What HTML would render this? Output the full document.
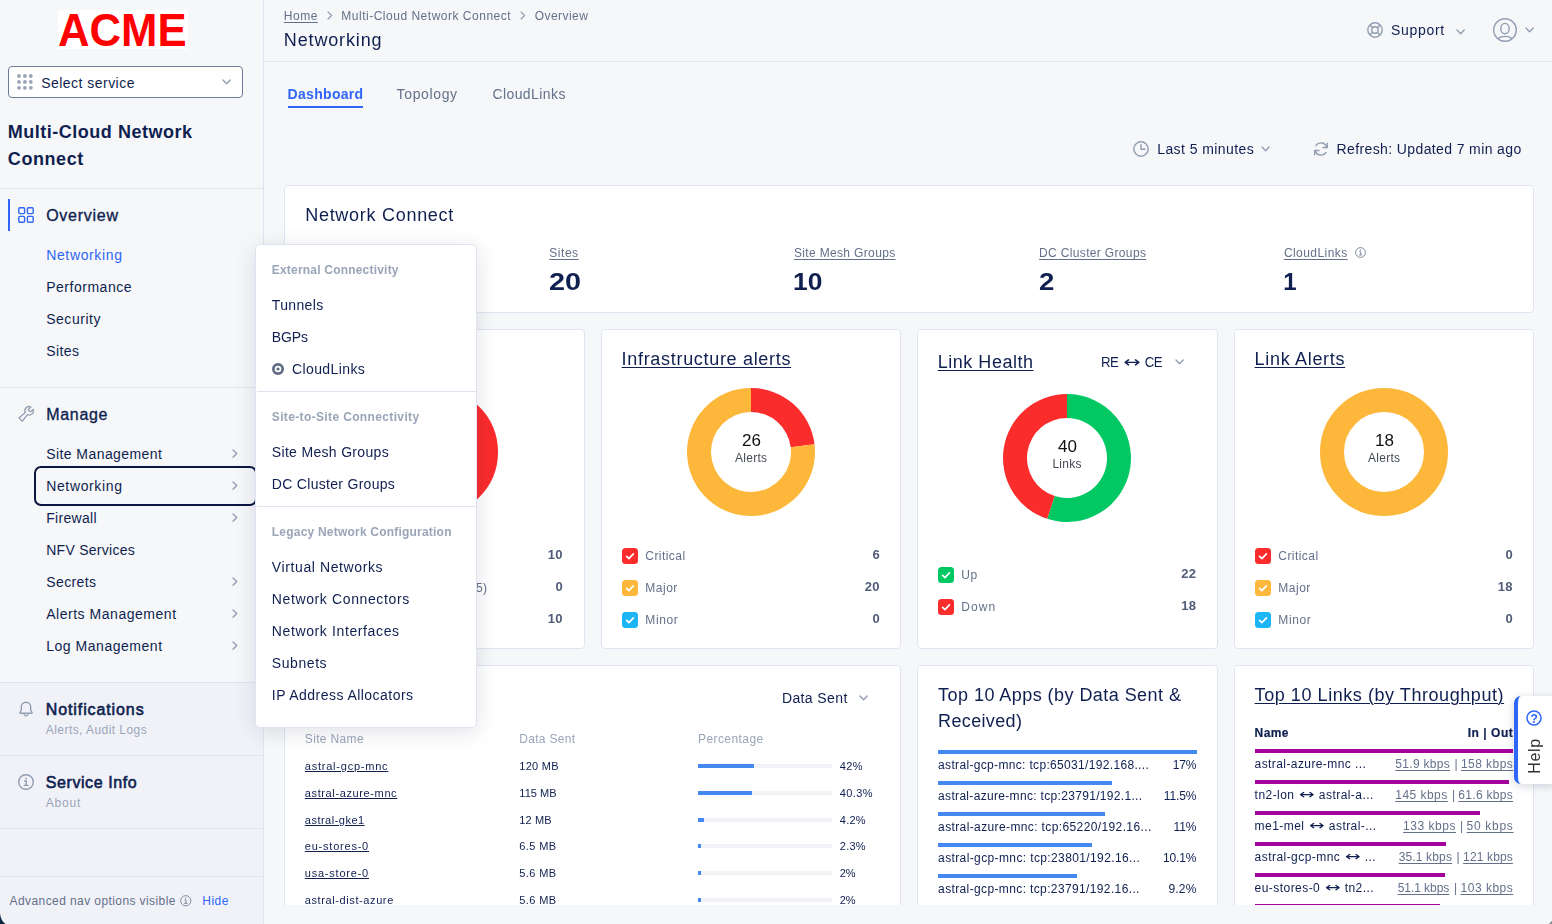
<!DOCTYPE html>
<html lang="en"><head><meta charset="utf-8"><title>Networking - Multi-Cloud Network Connect</title><style>
html,body{margin:0;padding:0}
body{width:1552px;height:924px;position:relative;overflow:hidden;opacity:0.9999;background:#f6f7f9;font-family:"Liberation Sans",sans-serif;color:#0f1f50}
.t{position:absolute;white-space:nowrap}
.b{position:absolute;box-sizing:border-box}
.ar{display:inline-block;font-family:"DejaVu Sans",sans-serif;font-size:1.12em;line-height:0;transform:scaleX(1.38);margin:0 0.19em}
svg.b{overflow:visible}
</style></head><body>
<div class="b" style="left:0px;top:0px;width:264px;height:924px;background:#f6f7f9;border-right:1px solid #dfe4f0;"></div>
<div class="b" style="left:0px;top:682px;width:263px;height:242px;background:#f1f2f8;"></div>
<div class="b" style="left:264px;top:61px;width:1288px;height:1px;background:#dfe4f0;"></div>
<div class="b" style="left:58px;top:10px;width:130px;height:39px;background:#ffffff;"></div>
<span class="t" style="top:7px;font-size:46px;line-height:46px;left:57.8px;font-weight:700;color:#ff0000;transform:scaleX(0.95);transform-origin:0 0;">ACME</span>
<div class="b" style="left:8px;top:66px;width:235px;height:32px;background:#fff;border:1px solid #6f7c98;border-radius:4px;"></div>
<svg class="b" style="left:17.3px;top:74.2px;" width="16" height="16" viewBox="0 0 16 16"><g fill="#9aa5b8"><circle cx="2.0" cy="2.0" r="1.9"/><circle cx="2.0" cy="7.9" r="1.9"/><circle cx="2.0" cy="13.8" r="1.9"/><circle cx="7.9" cy="2.0" r="1.9"/><circle cx="7.9" cy="7.9" r="1.9"/><circle cx="7.9" cy="13.8" r="1.9"/><circle cx="13.8" cy="2.0" r="1.9"/><circle cx="13.8" cy="7.9" r="1.9"/><circle cx="13.8" cy="13.8" r="1.9"/></g></svg>
<span class="t" style="top:76px;font-size:14px;line-height:14px;left:41.2px;letter-spacing:0.47px;">Select service</span>
<svg class="b" style="left:220.5px;top:77.7px;" width="11.2" height="7.8" viewBox="0 0 11.2 7.8"><path d="M2 2 L5.6 5.8 L9.2 2" fill="none" stroke="#929db2" stroke-width="1.4" stroke-linecap="round" stroke-linejoin="round"/></svg>
<span class="t" style="top:123px;font-size:18px;line-height:18px;left:7.8px;font-weight:700;letter-spacing:0.51px;">Multi-Cloud Network</span>
<span class="t" style="top:150px;font-size:18px;line-height:18px;left:7.8px;font-weight:700;letter-spacing:0.58px;">Connect</span>
<div class="b" style="left:0px;top:188px;width:263px;height:1px;background:#dfe4f0;"></div>
<div class="b" style="left:8px;top:199px;width:2px;height:32px;background:#2f66f6;"></div>
<svg class="b" style="left:18px;top:207px;" width="16" height="16" viewBox="0 0 16 16"><g fill="none" stroke="#2f66f6" stroke-width="1.4"><rect x="0.8" y="0.8" width="5.8" height="5.8" rx="1"/><rect x="9.4" y="0.8" width="5.8" height="5.8" rx="1"/><rect x="0.8" y="9.4" width="5.8" height="5.8" rx="1"/><rect x="9.4" y="9.4" width="5.8" height="5.8" rx="1"/></g></svg>
<span class="t" style="top:208px;font-size:16px;line-height:16px;left:46.2px;letter-spacing:0.73px;-webkit-text-stroke:0.35px #0f1f50;">Overview</span>
<span class="t" style="top:248px;font-size:14px;line-height:14px;left:46.2px;color:#2f66f6;letter-spacing:0.64px;">Networking</span>
<span class="t" style="top:280px;font-size:14px;line-height:14px;left:46.2px;letter-spacing:0.52px;">Performance</span>
<span class="t" style="top:312px;font-size:14px;line-height:14px;left:46.2px;letter-spacing:0.53px;">Security</span>
<span class="t" style="top:344px;font-size:14px;line-height:14px;left:46.2px;letter-spacing:0.42px;">Sites</span>
<div class="b" style="left:0px;top:387px;width:263px;height:1px;background:#dfe4f0;"></div>
<svg class="b" style="left:18px;top:406px;" width="16" height="16" viewBox="0 0 16 16"><path d="M0.900 11.900L7.300 6.600A4.200 4.200 0 0 1 12.900 1L10.200 3.700L12.500 5.900L15.100 3.400A4.200 4.200 0 0 1 9.500 8.700L4.300 15.200Z" fill="none" stroke="#929db2" stroke-width="1.300" stroke-linejoin="round"/></svg>
<span class="t" style="top:407px;font-size:16px;line-height:16px;left:46.2px;letter-spacing:0.7px;-webkit-text-stroke:0.35px #0f1f50;">Manage</span>
<span class="t" style="top:447px;font-size:14px;line-height:14px;left:46.2px;letter-spacing:0.43px;">Site Management</span>
<svg class="b" style="left:230.6px;top:448.4px;" width="7.8" height="11.2" viewBox="0 0 7.8 11.2"><path d="M2 2 L5.8 5.6 L2 9.2" fill="none" stroke="#929db2" stroke-width="1.4" stroke-linecap="round" stroke-linejoin="round"/></svg>
<span class="t" style="top:479px;font-size:14px;line-height:14px;left:46.2px;letter-spacing:0.64px;">Networking</span>
<svg class="b" style="left:230.6px;top:480.4px;" width="7.8" height="11.2" viewBox="0 0 7.8 11.2"><path d="M2 2 L5.8 5.6 L2 9.2" fill="none" stroke="#929db2" stroke-width="1.4" stroke-linecap="round" stroke-linejoin="round"/></svg>
<span class="t" style="top:511px;font-size:14px;line-height:14px;left:46.2px;letter-spacing:0.3px;">Firewall</span>
<svg class="b" style="left:230.6px;top:512.4px;" width="7.8" height="11.2" viewBox="0 0 7.8 11.2"><path d="M2 2 L5.8 5.6 L2 9.2" fill="none" stroke="#929db2" stroke-width="1.4" stroke-linecap="round" stroke-linejoin="round"/></svg>
<span class="t" style="top:543px;font-size:14px;line-height:14px;left:46.2px;letter-spacing:0.27px;">NFV Services</span>
<span class="t" style="top:575px;font-size:14px;line-height:14px;left:46.2px;letter-spacing:0.41px;">Secrets</span>
<svg class="b" style="left:230.6px;top:576.4px;" width="7.8" height="11.2" viewBox="0 0 7.8 11.2"><path d="M2 2 L5.8 5.6 L2 9.2" fill="none" stroke="#929db2" stroke-width="1.4" stroke-linecap="round" stroke-linejoin="round"/></svg>
<span class="t" style="top:607px;font-size:14px;line-height:14px;left:46.2px;letter-spacing:0.53px;">Alerts Management</span>
<svg class="b" style="left:230.6px;top:608.4px;" width="7.8" height="11.2" viewBox="0 0 7.8 11.2"><path d="M2 2 L5.8 5.6 L2 9.2" fill="none" stroke="#929db2" stroke-width="1.4" stroke-linecap="round" stroke-linejoin="round"/></svg>
<span class="t" style="top:639px;font-size:14px;line-height:14px;left:46.2px;letter-spacing:0.53px;">Log Management</span>
<svg class="b" style="left:230.6px;top:640.4px;" width="7.8" height="11.2" viewBox="0 0 7.8 11.2"><path d="M2 2 L5.8 5.6 L2 9.2" fill="none" stroke="#929db2" stroke-width="1.4" stroke-linecap="round" stroke-linejoin="round"/></svg>
<div class="b" style="left:34px;top:466px;width:223px;height:40px;border:2px solid #0b1641;border-radius:7px;"></div>
<div class="b" style="left:0px;top:682px;width:263px;height:1px;background:#dfe4f0;"></div>
<svg class="b" style="left:18px;top:701px;" width="16" height="16" viewBox="0 0 16 16"><path d="M8 1.2c-2.9 0-4.7 2.2-4.7 4.9v2.6c0 .9-.5 1.7-1.2 2.3-.5.4-.3 1.3.4 1.3h11c.7 0 .9-.9.4-1.3-.7-.6-1.2-1.4-1.2-2.3V6.100c0-2.700-1.800-4.900-4.700-4.900z M6.200 13.600a1.900 1.900 0 0 0 3.600 0" fill="none" stroke="#929db2" stroke-width="1.4" stroke-linejoin="round" stroke-linecap="round"/></svg>
<span class="t" style="top:702px;font-size:16px;line-height:16px;left:45.8px;letter-spacing:0.89px;-webkit-text-stroke:0.6px #0f1f50;">Notifications</span>
<span class="t" style="top:724px;font-size:12px;line-height:12px;left:45.8px;color:#9aa5b8;letter-spacing:0.44px;">Alerts, Audit Logs</span>
<div class="b" style="left:0px;top:755px;width:263px;height:1px;background:#dfe4f0;"></div>
<svg class="b" style="left:18px;top:774px;" width="16" height="16" viewBox="0 0 16 16"><circle cx="8" cy="8" r="7.3" fill="none" stroke="#929db2" stroke-width="1.4"/><path d="M6.6 7h1.6v4.300M6.300 11.400h3.600" fill="none" stroke="#929db2" stroke-width="1.400" stroke-linecap="round"/><circle cx="8" cy="4.600" r="0.900" fill="#8e99ad"/></svg>
<span class="t" style="top:775px;font-size:16px;line-height:16px;left:45.8px;letter-spacing:0.57px;-webkit-text-stroke:0.6px #0f1f50;">Service Info</span>
<span class="t" style="top:797px;font-size:12px;line-height:12px;left:45.8px;color:#9aa5b8;letter-spacing:0.79px;">About</span>
<div class="b" style="left:0px;top:828px;width:263px;height:1px;background:#dfe4f0;"></div>
<div class="b" style="left:0px;top:876px;width:263px;height:1px;background:#dfe4f0;"></div>
<span class="t" style="top:895px;font-size:12px;line-height:12px;left:9.6px;color:#64708a;letter-spacing:0.41px;">Advanced nav options visible</span>
<svg class="b" style="left:180.2px;top:895px;" width="11.5" height="11.5" viewBox="0 0 11.5 11.5"><circle cx="5.75" cy="5.75" r="5.1" fill="none" stroke="#7f8aa0" stroke-width="1"/><path d="M4.800 5h1.200v3.200M4.500 8.300h2.700" fill="none" stroke="#7f8aa0" stroke-width="1" stroke-linecap="round"/><circle cx="5.750" cy="3.200" r="0.700" fill="#7f8aa0"/></svg>
<span class="t" style="top:895px;font-size:12px;line-height:12px;left:202.2px;color:#2f66f6;letter-spacing:0.54px;">Hide</span>
<span class="t" style="top:10px;font-size:12px;line-height:12px;left:283.8px;color:#64708a;letter-spacing:0.5px;text-decoration:underline;text-underline-offset:2px;text-decoration-thickness:1px;">Home</span>
<svg class="b" style="left:325.7px;top:10.0px;" width="7.6" height="11" viewBox="0 0 7.6 11"><path d="M2 2 L5.6 5.5 L2 9" fill="none" stroke="#8e99ad" stroke-width="1.1" stroke-linecap="round" stroke-linejoin="round"/></svg>
<span class="t" style="top:10px;font-size:12px;line-height:12px;left:341.3px;color:#64708a;letter-spacing:0.51px;">Multi-Cloud Network Connect</span>
<svg class="b" style="left:519.2px;top:10.0px;" width="7.6" height="11" viewBox="0 0 7.6 11"><path d="M2 2 L5.6 5.5 L2 9" fill="none" stroke="#8e99ad" stroke-width="1.1" stroke-linecap="round" stroke-linejoin="round"/></svg>
<span class="t" style="top:10px;font-size:12px;line-height:12px;left:534.8px;color:#64708a;letter-spacing:0.44px;">Overview</span>
<span class="t" style="top:31px;font-size:18px;line-height:18px;left:283.8px;letter-spacing:0.86px;">Networking</span>
<svg class="b" style="left:1366.6px;top:21.8px;" width="16" height="16" viewBox="0 0 16 16"><g fill="none" stroke="#929db2" stroke-width="1.4"><circle cx="8" cy="8" r="7.2"/><circle cx="8" cy="8" r="3.2"/><path d="M2.900 2.900l2.800 2.800M13.100 2.900l-2.800 2.800M2.900 13.100l2.800-2.800M13.100 13.100l-2.800-2.800"/></g></svg>
<span class="t" style="top:23px;font-size:14px;line-height:14px;left:1391.0px;letter-spacing:0.68px;">Support</span>
<svg class="b" style="left:1454.6px;top:27.5px;" width="11.2" height="7.8" viewBox="0 0 11.2 7.8"><path d="M2 2 L5.6 5.8 L9.2 2" fill="none" stroke="#929db2" stroke-width="1.4" stroke-linecap="round" stroke-linejoin="round"/></svg>
<svg class="b" style="left:1493px;top:17.6px;" width="24" height="24" viewBox="0 0 24 24"><g fill="none" stroke="#929db2" stroke-width="1.400"><circle cx="12" cy="12" r="11.300"/><ellipse cx="12" cy="10.600" rx="4.200" ry="5.200"/><path d="M4.800 20.600c2-1.500 4.400-2.200 7.200-2.200s5.200.7 7.200 2.200"/></g></svg>
<svg class="b" style="left:1523.6px;top:25.6px;" width="11.2" height="7.8" viewBox="0 0 11.2 7.8"><path d="M2 2 L5.6 5.8 L9.2 2" fill="none" stroke="#929db2" stroke-width="1.4" stroke-linecap="round" stroke-linejoin="round"/></svg>
<span class="t" style="top:87px;font-size:14px;line-height:14px;left:287.6px;font-weight:700;color:#2f66f6;letter-spacing:0.3px;">Dashboard</span>
<div class="b" style="left:288px;top:106px;width:75px;height:2px;background:#2f66f6;"></div>
<span class="t" style="top:87px;font-size:14px;line-height:14px;left:396.6px;color:#64708a;letter-spacing:0.64px;">Topology</span>
<span class="t" style="top:87px;font-size:14px;line-height:14px;left:492.4px;color:#64708a;letter-spacing:0.42px;">CloudLinks</span>
<svg class="b" style="left:1133px;top:141px;" width="16" height="16" viewBox="0 0 16 16"><g fill="none" stroke="#929db2" stroke-width="1.4" stroke-linecap="round"><circle cx="8" cy="8" r="7.2"/><path d="M8 3.600v4.600h4"/></g></svg>
<span class="t" style="top:142px;font-size:14px;line-height:14px;left:1157.2px;letter-spacing:0.42px;">Last 5 minutes</span>
<svg class="b" style="left:1260.2px;top:144.9px;" width="11.2" height="7.8" viewBox="0 0 11.2 7.8"><path d="M2 2 L5.6 5.8 L9.2 2" fill="none" stroke="#929db2" stroke-width="1.4" stroke-linecap="round" stroke-linejoin="round"/></svg>
<svg class="b" style="left:1313px;top:141px;" width="16" height="16" viewBox="0 0 16 16"><g fill="none" stroke="#929db2" stroke-width="1.400" stroke-linecap="round" stroke-linejoin="round"><path d="M13.800 6.500A6 6 0 0 0 3 4.500"/><path d="M14.300 2.200v4.300h-4.300"/><path d="M2.200 9.500A6 6 0 0 0 13 11.500"/><path d="M1.700 13.800V9.500h4.300"/></g></svg>
<span class="t" style="top:142px;font-size:14px;line-height:14px;left:1336.6px;letter-spacing:0.38px;">Refresh: Updated 7 min ago</span>
<div class="b" style="left:284px;top:185px;width:1250px;height:128px;background:#fff;border:1px solid #dfe4f0;border-radius:4px;"></div>
<span class="t" style="top:206px;font-size:18px;line-height:18px;left:305.2px;letter-spacing:0.72px;">Network Connect</span>
<span class="t" style="top:247px;font-size:12px;line-height:12px;left:549.3px;color:#64708a;letter-spacing:0.53px;text-decoration:underline;text-underline-offset:2px;text-decoration-thickness:1px;">Sites</span>
<span class="t" style="top:270px;font-size:24px;line-height:24px;left:548.7px;font-weight:700;transform:scaleX(1.2);transform-origin:0 0;">20</span>
<span class="t" style="top:247px;font-size:12px;line-height:12px;left:793.9px;color:#64708a;letter-spacing:0.35px;text-decoration:underline;text-underline-offset:2px;text-decoration-thickness:1px;">Site Mesh Groups</span>
<span class="t" style="top:270px;font-size:24px;line-height:24px;left:793.3px;font-weight:700;transform:scaleX(1.1);transform-origin:0 0;">10</span>
<span class="t" style="top:247px;font-size:12px;line-height:12px;left:1039.1px;color:#64708a;letter-spacing:0.34px;text-decoration:underline;text-underline-offset:2px;text-decoration-thickness:1px;">DC Cluster Groups</span>
<span class="t" style="top:270px;font-size:24px;line-height:24px;left:1038.5px;font-weight:700;transform:scaleX(1.15);transform-origin:0 0;">2</span>
<span class="t" style="top:247px;font-size:12px;line-height:12px;left:1283.9px;color:#64708a;letter-spacing:0.44px;text-decoration:underline;text-underline-offset:2px;text-decoration-thickness:1px;">CloudLinks</span>
<span class="t" style="top:270px;font-size:24px;line-height:24px;left:1283.3px;font-weight:700;transform:scaleX(1.0);transform-origin:0 0;">1</span>
<svg class="b" style="left:1355px;top:247px;" width="11" height="11" viewBox="0 0 11 11"><circle cx="5.5" cy="5.5" r="4.900" fill="none" stroke="#7f8aa0" stroke-width="1"/><path d="M4.600 4.800h1.100v3M4.300 7.900h2.500" fill="none" stroke="#7f8aa0" stroke-width="1" stroke-linecap="round"/><circle cx="5.500" cy="3" r="0.700" fill="#7f8aa0"/></svg>
<div class="b" style="left:284px;top:329px;width:301px;height:320px;background:#fff;border:1px solid #dfe4f0;border-radius:4px;"></div>
<svg class="b" style="left:370px;top:388px;" width="128" height="128" viewBox="0 0 128 128"><circle cx="64" cy="64" r="52.0" fill="none" stroke="#fb2c2c" stroke-width="24"/></svg>
<span class="t" style="top:432px;font-size:17px;line-height:17px;left:425.0px;color:#111;">10</span>
<span class="t" style="top:452px;font-size:12px;line-height:12px;left:420.1px;color:#444a55;letter-spacing:0.3px;">Sites</span>
<span class="t" style="top:548px;font-size:13px;line-height:13px;right:989.1px;font-weight:700;color:#4f5d78;letter-spacing:0.3px;">10</span>
<span class="t" style="top:580px;font-size:13px;line-height:13px;right:989.1px;font-weight:700;color:#4f5d78;letter-spacing:0.3px;">0</span>
<span class="t" style="top:612px;font-size:13px;line-height:13px;right:989.1px;font-weight:700;color:#4f5d78;letter-spacing:0.3px;">10</span>
<span class="t" style="top:582px;font-size:12px;line-height:12px;right:1064.6px;color:#64708a;letter-spacing:0.3px;">Waiting for registration (5)</span>
<div class="b" style="left:601px;top:329px;width:300px;height:320px;background:#fff;border:1px solid #dfe4f0;border-radius:4px;"></div>
<span class="t" style="top:349.5px;font-size:18px;line-height:18px;left:621.6px;letter-spacing:0.69px;text-decoration:underline;text-underline-offset:2px;text-decoration-thickness:1px;">Infrastructure alerts</span>
<svg class="b" style="left:687px;top:388px;" width="128" height="128" viewBox="0 0 128 128"><path d="M64.00 0.00A64 64 0 0 1 127.53 56.29L103.71 59.18A40 40 0 0 0 64.00 24.00Z" fill="#fb2c2c"/><path d="M127.53 56.29A64 64 0 1 1 64.00 0.00L64.00 24.00A40 40 0 1 0 103.71 59.18Z" fill="#fdb73a"/></svg>
<span class="t" style="top:432px;font-size:17px;line-height:17px;left:742.0px;color:#111;">26</span>
<span class="t" style="top:452px;font-size:12px;line-height:12px;left:734.9px;color:#444a55;letter-spacing:0.3px;">Alerts</span>
<svg class="b" style="left:622px;top:548px;" width="16" height="16" viewBox="0 0 16 16"><rect width="16" height="16" rx="3.5" fill="#fb2c2c"/><path d="M4.600 8.300l2.300 2.300 4.500-4.700" fill="none" stroke="#fff" stroke-width="1.700" stroke-linecap="round" stroke-linejoin="round"/></svg>
<span class="t" style="top:550.3px;font-size:12px;line-height:12px;left:645.3px;color:#64708a;letter-spacing:0.45px;">Critical</span>
<span class="t" style="top:548px;font-size:13px;line-height:13px;right:672.1px;font-weight:700;color:#4f5d78;letter-spacing:0.3px;">6</span>
<svg class="b" style="left:622px;top:580px;" width="16" height="16" viewBox="0 0 16 16"><rect width="16" height="16" rx="3.5" fill="#fdb73a"/><path d="M4.600 8.300l2.300 2.300 4.500-4.700" fill="none" stroke="#fff" stroke-width="1.700" stroke-linecap="round" stroke-linejoin="round"/></svg>
<span class="t" style="top:582.3px;font-size:12px;line-height:12px;left:645.3px;color:#64708a;letter-spacing:0.5px;">Major</span>
<span class="t" style="top:580px;font-size:13px;line-height:13px;right:672.1px;font-weight:700;color:#4f5d78;letter-spacing:0.3px;">20</span>
<svg class="b" style="left:622px;top:612px;" width="16" height="16" viewBox="0 0 16 16"><rect width="16" height="16" rx="3.5" fill="#1db5f5"/><path d="M4.600 8.300l2.300 2.300 4.500-4.700" fill="none" stroke="#fff" stroke-width="1.700" stroke-linecap="round" stroke-linejoin="round"/></svg>
<span class="t" style="top:614.3px;font-size:12px;line-height:12px;left:645.3px;color:#64708a;letter-spacing:0.6px;">Minor</span>
<span class="t" style="top:612px;font-size:13px;line-height:13px;right:672.1px;font-weight:700;color:#4f5d78;letter-spacing:0.3px;">0</span>
<div class="b" style="left:917px;top:329px;width:301px;height:320px;background:#fff;border:1px solid #dfe4f0;border-radius:4px;"></div>
<span class="t" style="top:352.5px;font-size:18px;line-height:18px;left:937.7px;letter-spacing:0.53px;text-decoration:underline;text-underline-offset:2px;text-decoration-thickness:1px;">Link Health</span>
<span class="t" style="top:355px;font-size:14px;line-height:14px;left:1101.0px;letter-spacing:-0.6px;transform:scaleX(0.945);transform-origin:0 0;">RE<span class="ar" style="margin:0 0.46em 0 0.5em;letter-spacing:0">↔</span>CE</span>
<svg class="b" style="left:1173.9px;top:357.7px;" width="11.2" height="7.8" viewBox="0 0 11.2 7.8"><path d="M2 2 L5.6 5.8 L9.2 2" fill="none" stroke="#929db2" stroke-width="1.4" stroke-linecap="round" stroke-linejoin="round"/></svg>
<svg class="b" style="left:1003px;top:394px;" width="128" height="128" viewBox="0 0 128 128"><path d="M64.00 0.00A64 64 0 1 1 44.22 124.87L51.64 102.04A40 40 0 1 0 64.00 24.00Z" fill="#02c864"/><path d="M44.22 124.87A64 64 0 0 1 64.00 0.00L64.00 24.00A40 40 0 0 0 51.64 102.04Z" fill="#fb2c2c"/></svg>
<span class="t" style="top:438px;font-size:17px;line-height:17px;left:1058.0px;color:#111;">40</span>
<span class="t" style="top:458px;font-size:12px;line-height:12px;left:1052.4px;color:#444a55;letter-spacing:0.3px;">Links</span>
<svg class="b" style="left:938px;top:567px;" width="16" height="16" viewBox="0 0 16 16"><rect width="16" height="16" rx="3.5" fill="#02c864"/><path d="M4.600 8.300l2.300 2.300 4.500-4.700" fill="none" stroke="#fff" stroke-width="1.700" stroke-linecap="round" stroke-linejoin="round"/></svg>
<span class="t" style="top:569.3px;font-size:12px;line-height:12px;left:961.3px;color:#64708a;letter-spacing:0.46px;">Up</span>
<span class="t" style="top:567px;font-size:13px;line-height:13px;right:355.6px;font-weight:700;color:#4f5d78;letter-spacing:0.3px;">22</span>
<svg class="b" style="left:938px;top:599px;" width="16" height="16" viewBox="0 0 16 16"><rect width="16" height="16" rx="3.5" fill="#fb2c2c"/><path d="M4.600 8.300l2.300 2.300 4.500-4.700" fill="none" stroke="#fff" stroke-width="1.700" stroke-linecap="round" stroke-linejoin="round"/></svg>
<span class="t" style="top:601.3px;font-size:12px;line-height:12px;left:961.3px;color:#64708a;letter-spacing:1.04px;">Down</span>
<span class="t" style="top:599px;font-size:13px;line-height:13px;right:355.6px;font-weight:700;color:#4f5d78;letter-spacing:0.3px;">18</span>
<div class="b" style="left:1234px;top:329px;width:300px;height:320px;background:#fff;border:1px solid #dfe4f0;border-radius:4px;"></div>
<span class="t" style="top:349.5px;font-size:18px;line-height:18px;left:1254.6px;letter-spacing:0.68px;text-decoration:underline;text-underline-offset:2px;text-decoration-thickness:1px;">Link Alerts</span>
<svg class="b" style="left:1320px;top:388px;" width="128" height="128" viewBox="0 0 128 128"><circle cx="64" cy="64" r="52.0" fill="none" stroke="#fdb73a" stroke-width="24"/></svg>
<span class="t" style="top:432px;font-size:17px;line-height:17px;left:1375.0px;color:#111;">18</span>
<span class="t" style="top:452px;font-size:12px;line-height:12px;left:1367.9px;color:#444a55;letter-spacing:0.3px;">Alerts</span>
<svg class="b" style="left:1255px;top:548px;" width="16" height="16" viewBox="0 0 16 16"><rect width="16" height="16" rx="3.5" fill="#fb2c2c"/><path d="M4.600 8.300l2.300 2.300 4.500-4.700" fill="none" stroke="#fff" stroke-width="1.700" stroke-linecap="round" stroke-linejoin="round"/></svg>
<span class="t" style="top:550.3px;font-size:12px;line-height:12px;left:1278.3px;color:#64708a;letter-spacing:0.45px;">Critical</span>
<span class="t" style="top:548px;font-size:13px;line-height:13px;right:39.1px;font-weight:700;color:#4f5d78;letter-spacing:0.3px;">0</span>
<svg class="b" style="left:1255px;top:580px;" width="16" height="16" viewBox="0 0 16 16"><rect width="16" height="16" rx="3.5" fill="#fdb73a"/><path d="M4.600 8.300l2.300 2.300 4.500-4.700" fill="none" stroke="#fff" stroke-width="1.700" stroke-linecap="round" stroke-linejoin="round"/></svg>
<span class="t" style="top:582.3px;font-size:12px;line-height:12px;left:1278.3px;color:#64708a;letter-spacing:0.5px;">Major</span>
<span class="t" style="top:580px;font-size:13px;line-height:13px;right:39.1px;font-weight:700;color:#4f5d78;letter-spacing:0.3px;">18</span>
<svg class="b" style="left:1255px;top:612px;" width="16" height="16" viewBox="0 0 16 16"><rect width="16" height="16" rx="3.5" fill="#1db5f5"/><path d="M4.600 8.300l2.300 2.300 4.500-4.700" fill="none" stroke="#fff" stroke-width="1.700" stroke-linecap="round" stroke-linejoin="round"/></svg>
<span class="t" style="top:614.3px;font-size:12px;line-height:12px;left:1278.3px;color:#64708a;letter-spacing:0.6px;">Minor</span>
<span class="t" style="top:612px;font-size:13px;line-height:13px;right:39.1px;font-weight:700;color:#4f5d78;letter-spacing:0.3px;">0</span>
<div class="b" style="left:284px;top:665px;width:617px;height:260px;background:#fff;border:1px solid #dfe4f0;border-radius:4px;"></div>
<span class="t" style="top:688px;font-size:18px;line-height:18px;left:305.2px;">Top 10 Sites</span>
<span class="t" style="top:691px;font-size:14px;line-height:14px;left:781.9px;letter-spacing:0.39px;">Data Sent</span>
<svg class="b" style="left:857.5px;top:693.7px;" width="11.2" height="7.8" viewBox="0 0 11.2 7.8"><path d="M2 2 L5.6 5.8 L9.2 2" fill="none" stroke="#929db2" stroke-width="1.4" stroke-linecap="round" stroke-linejoin="round"/></svg>
<span class="t" style="top:733px;font-size:12px;line-height:12px;left:304.8px;color:#9aa5b8;letter-spacing:0.35px;">Site Name</span>
<span class="t" style="top:733px;font-size:12px;line-height:12px;left:519.3px;color:#9aa5b8;letter-spacing:0.3px;">Data Sent</span>
<span class="t" style="top:733px;font-size:12px;line-height:12px;left:698.0px;color:#9aa5b8;letter-spacing:0.42px;">Percentage</span>
<span class="t" style="top:761px;font-size:11px;line-height:11px;left:304.8px;letter-spacing:0.77px;text-decoration:underline;text-underline-offset:2px;text-decoration-thickness:1px;text-underline-offset:1px;">astral-gcp-mnc</span>
<span class="t" style="top:761px;font-size:11px;line-height:11px;left:519.3px;letter-spacing:0.26px;">120 MB</span>
<div class="b" style="left:698.4px;top:764px;width:133.7px;height:4px;background:#f1f3f7;"></div>
<div class="b" style="left:698.4px;top:764px;width:55.6px;height:4px;background:#4589f0;"></div>
<span class="t" style="top:761px;font-size:11px;line-height:11px;left:839.8px;letter-spacing:0.39px;">42%</span>
<span class="t" style="top:788px;font-size:11px;line-height:11px;left:304.8px;letter-spacing:0.62px;text-decoration:underline;text-underline-offset:2px;text-decoration-thickness:1px;text-underline-offset:1px;">astral-azure-mnc</span>
<span class="t" style="top:788px;font-size:11px;line-height:11px;left:519.3px;letter-spacing:0.04px;">115 MB</span>
<div class="b" style="left:698.4px;top:791px;width:133.7px;height:4px;background:#f1f3f7;"></div>
<div class="b" style="left:698.4px;top:791px;width:53.6px;height:4px;background:#4589f0;"></div>
<span class="t" style="top:788px;font-size:11px;line-height:11px;left:839.8px;letter-spacing:0.4px;">40.3%</span>
<span class="t" style="top:815px;font-size:11px;line-height:11px;left:304.8px;letter-spacing:0.49px;text-decoration:underline;text-underline-offset:2px;text-decoration-thickness:1px;text-underline-offset:1px;">astral-gke1</span>
<span class="t" style="top:815px;font-size:11px;line-height:11px;left:519.3px;letter-spacing:0.13px;">12 MB</span>
<div class="b" style="left:698.4px;top:818px;width:133.7px;height:4px;background:#f1f3f7;"></div>
<div class="b" style="left:698.4px;top:818px;width:5.6px;height:4px;background:#4589f0;"></div>
<span class="t" style="top:815px;font-size:11px;line-height:11px;left:839.8px;letter-spacing:0.24px;">4.2%</span>
<span class="t" style="top:841px;font-size:11px;line-height:11px;left:304.8px;letter-spacing:0.78px;text-decoration:underline;text-underline-offset:2px;text-decoration-thickness:1px;text-underline-offset:1px;">eu-stores-0</span>
<span class="t" style="top:841px;font-size:11px;line-height:11px;left:519.3px;letter-spacing:0.39px;">6.5 MB</span>
<div class="b" style="left:698.4px;top:844px;width:133.7px;height:4px;background:#f1f3f7;"></div>
<div class="b" style="left:698.4px;top:844px;width:3px;height:4px;background:#4589f0;"></div>
<span class="t" style="top:841px;font-size:11px;line-height:11px;left:839.8px;letter-spacing:0.24px;">2.3%</span>
<span class="t" style="top:868px;font-size:11px;line-height:11px;left:304.8px;letter-spacing:0.78px;text-decoration:underline;text-underline-offset:2px;text-decoration-thickness:1px;text-underline-offset:1px;">usa-store-0</span>
<span class="t" style="top:868px;font-size:11px;line-height:11px;left:519.3px;letter-spacing:0.39px;">5.6 MB</span>
<div class="b" style="left:698.4px;top:871px;width:133.7px;height:4px;background:#f1f3f7;"></div>
<div class="b" style="left:698.4px;top:871px;width:3px;height:4px;background:#4589f0;"></div>
<span class="t" style="top:868px;font-size:11px;line-height:11px;left:839.8px;letter-spacing:-0.1px;">2%</span>
<span class="t" style="top:895px;font-size:11px;line-height:11px;left:304.8px;letter-spacing:0.6px;text-decoration:underline;text-underline-offset:2px;text-decoration-thickness:1px;text-underline-offset:1px;">astral-dist-azure</span>
<span class="t" style="top:895px;font-size:11px;line-height:11px;left:519.3px;letter-spacing:0.39px;">5.6 MB</span>
<div class="b" style="left:698.4px;top:898px;width:133.7px;height:4px;background:#f1f3f7;"></div>
<div class="b" style="left:698.4px;top:898px;width:3px;height:4px;background:#4589f0;"></div>
<span class="t" style="top:895px;font-size:11px;line-height:11px;left:839.8px;letter-spacing:-0.1px;">2%</span>
<div class="b" style="left:917px;top:665px;width:301px;height:260px;background:#fff;border:1px solid #dfe4f0;border-radius:4px;"></div>
<span class="t" style="top:686px;font-size:18px;line-height:18px;left:938.1px;letter-spacing:0.45px;">Top 10 Apps (by Data Sent &amp;</span>
<span class="t" style="top:712px;font-size:18px;line-height:18px;left:938.1px;letter-spacing:0.35px;">Received)</span>
<div class="b" style="left:938px;top:750px;width:259.1px;height:4px;background:#4589f0;"></div>
<span class="t" style="top:758.5px;font-size:12px;line-height:12px;left:938.1px;letter-spacing:0.33px;">astral-gcp-mnc: tcp:65031/192.168....</span>
<span class="t" style="top:758.5px;font-size:12px;line-height:12px;right:355.8px;letter-spacing:-0.15px;">17%</span>
<div class="b" style="left:938px;top:781px;width:173.8px;height:4px;background:#4589f0;"></div>
<span class="t" style="top:789.5px;font-size:12px;line-height:12px;left:938.1px;letter-spacing:0.32px;">astral-azure-mnc: tcp:23791/192.1...</span>
<span class="t" style="top:789.5px;font-size:12px;line-height:12px;right:355.8px;letter-spacing:-0.15px;">11.5%</span>
<div class="b" style="left:938px;top:812px;width:166.8px;height:4px;background:#4589f0;"></div>
<span class="t" style="top:820.5px;font-size:12px;line-height:12px;left:938.1px;letter-spacing:0.38px;">astral-azure-mnc: tcp:65220/192.16...</span>
<span class="t" style="top:820.5px;font-size:12px;line-height:12px;right:355.8px;letter-spacing:-0.15px;">11%</span>
<div class="b" style="left:938px;top:843px;width:154.0px;height:4px;background:#4589f0;"></div>
<span class="t" style="top:851.5px;font-size:12px;line-height:12px;left:938.1px;letter-spacing:0.38px;">astral-gcp-mnc: tcp:23801/192.16...</span>
<span class="t" style="top:851.5px;font-size:12px;line-height:12px;right:355.8px;letter-spacing:-0.15px;">10.1%</span>
<div class="b" style="left:938px;top:874px;width:138.9px;height:4px;background:#4589f0;"></div>
<span class="t" style="top:882.5px;font-size:12px;line-height:12px;left:938.1px;letter-spacing:0.37px;">astral-gcp-mnc: tcp:23791/192.16...</span>
<span class="t" style="top:882.5px;font-size:12px;line-height:12px;right:355.5px;letter-spacing:0.15px;">9.2%</span>
<div class="b" style="left:1234px;top:665px;width:300px;height:260px;background:#fff;border:1px solid #dfe4f0;border-radius:4px;"></div>
<span class="t" style="top:686px;font-size:18px;line-height:18px;left:1254.6px;letter-spacing:0.56px;text-decoration:underline;text-underline-offset:2px;text-decoration-thickness:1px;">Top 10 Links (by Throughput)</span>
<span class="t" style="top:727px;font-size:12px;line-height:12px;left:1254.6px;font-weight:700;letter-spacing:0.37px;-webkit-text-stroke:0.2px #0f1f50;">Name</span>
<span class="t" style="top:727px;font-size:12px;line-height:12px;right:38.7px;font-weight:700;letter-spacing:0.54px;-webkit-text-stroke:0.2px #0f1f50;">In | Out</span>
<div class="b" style="left:1255px;top:749px;width:257.7px;height:4px;background:#a4049c;"></div>
<span class="t" style="top:758px;font-size:12px;line-height:12px;left:1254.6px;letter-spacing:0.41px;">astral-azure-mnc ...</span>
<span class="t" style="top:758px;font-size:12px;line-height:12px;right:38.8px;color:#64708a;letter-spacing:0.44px;text-decoration:underline;text-underline-offset:2px;text-decoration-thickness:1px;">158 kbps</span>
<span class="t" style="top:758px;font-size:12px;line-height:12px;left:1454.5px;color:#64708a;">|</span>
<span class="t" style="top:758px;font-size:12px;line-height:12px;right:101.9px;color:#64708a;letter-spacing:0.3px;text-decoration:underline;text-underline-offset:2px;text-decoration-thickness:1px;">51.9 kbps</span>
<div class="b" style="left:1255px;top:780px;width:254px;height:4px;background:#a4049c;"></div>
<span class="t" style="top:789px;font-size:12px;line-height:12px;left:1254.6px;letter-spacing:0.45px;">tn2-lon <span class="ar">↔</span> astral-a...</span>
<span class="t" style="top:789px;font-size:12px;line-height:12px;right:38.9px;color:#64708a;letter-spacing:0.3px;text-decoration:underline;text-underline-offset:2px;text-decoration-thickness:1px;">61.6 kbps</span>
<span class="t" style="top:789px;font-size:12px;line-height:12px;left:1451.9px;color:#64708a;">|</span>
<span class="t" style="top:789px;font-size:12px;line-height:12px;right:104.3px;color:#64708a;letter-spacing:0.47px;text-decoration:underline;text-underline-offset:2px;text-decoration-thickness:1px;">145 kbps</span>
<div class="b" style="left:1255px;top:811px;width:225px;height:4px;background:#a4049c;"></div>
<span class="t" style="top:820px;font-size:12px;line-height:12px;left:1254.6px;letter-spacing:0.45px;">me1-mel <span class="ar">↔</span> astral-...</span>
<span class="t" style="top:820px;font-size:12px;line-height:12px;right:38.5px;color:#64708a;letter-spacing:0.7px;text-decoration:underline;text-underline-offset:2px;text-decoration-thickness:1px;">50 kbps</span>
<span class="t" style="top:820px;font-size:12px;line-height:12px;left:1460.1px;color:#64708a;">|</span>
<span class="t" style="top:820px;font-size:12px;line-height:12px;right:96.1px;color:#64708a;letter-spacing:0.51px;text-decoration:underline;text-underline-offset:2px;text-decoration-thickness:1px;">133 kbps</span>
<div class="b" style="left:1255px;top:842px;width:191px;height:4px;background:#a4049c;"></div>
<span class="t" style="top:851px;font-size:12px;line-height:12px;left:1254.6px;letter-spacing:0.45px;">astral-gcp-mnc <span class="ar">↔</span> ...</span>
<span class="t" style="top:851px;font-size:12px;line-height:12px;right:39.1px;color:#64708a;letter-spacing:0.14px;text-decoration:underline;text-underline-offset:2px;text-decoration-thickness:1px;">121 kbps</span>
<span class="t" style="top:851px;font-size:12px;line-height:12px;left:1456.6px;color:#64708a;">|</span>
<span class="t" style="top:851px;font-size:12px;line-height:12px;right:99.9px;color:#64708a;letter-spacing:0.16px;text-decoration:underline;text-underline-offset:2px;text-decoration-thickness:1px;">35.1 kbps</span>
<div class="b" style="left:1255px;top:873px;width:190px;height:4px;background:#a4049c;"></div>
<span class="t" style="top:882px;font-size:12px;line-height:12px;left:1254.6px;letter-spacing:0.45px;">eu-stores-0 <span class="ar">↔</span> tn2...</span>
<span class="t" style="top:882px;font-size:12px;line-height:12px;right:38.7px;color:#64708a;letter-spacing:0.51px;text-decoration:underline;text-underline-offset:2px;text-decoration-thickness:1px;">103 kbps</span>
<span class="t" style="top:882px;font-size:12px;line-height:12px;left:1454.0px;color:#64708a;">|</span>
<span class="t" style="top:882px;font-size:12px;line-height:12px;right:102.7px;color:#64708a;letter-spacing:-0.04px;text-decoration:underline;text-underline-offset:2px;text-decoration-thickness:1px;">51.1 kbps</span>
<div class="b" style="left:1255px;top:904px;width:185px;height:4px;background:#a4049c;"></div>
<div class="b" style="left:264px;top:905px;width:1288px;height:19px;background:#f6f7f9;"></div>
<div class="b" style="left:255px;top:244px;width:222px;height:484px;background:#fff;border:1px solid #dfe4f0;border-radius:5px;box-shadow:0 4px 22px rgba(20,30,70,0.13);"></div>
<span class="t" style="top:264px;font-size:12px;line-height:12px;left:271.8px;font-weight:700;color:#9aa5b8;letter-spacing:0.2px;">External Connectivity</span>
<span class="t" style="top:298px;font-size:14px;line-height:14px;left:271.8px;letter-spacing:0.35px;">Tunnels</span>
<span class="t" style="top:330px;font-size:14px;line-height:14px;left:271.8px;letter-spacing:-0.15px;">BGPs</span>
<svg class="b" style="left:272px;top:363px;" width="12" height="12" viewBox="0 0 12 12"><circle cx="6" cy="6" r="6" fill="#5f6b84"/><circle cx="6" cy="6" r="3.3" fill="#fff"/><circle cx="6" cy="6" r="1.600" fill="#5f6b84"/></svg>
<span class="t" style="top:362px;font-size:14px;line-height:14px;left:292.0px;letter-spacing:0.39px;">CloudLinks</span>
<div class="b" style="left:257px;top:391px;width:219px;height:1px;background:#dfe4f0;"></div>
<span class="t" style="top:411px;font-size:12px;line-height:12px;left:271.8px;font-weight:700;color:#9aa5b8;letter-spacing:0.36px;">Site-to-Site Connectivity</span>
<span class="t" style="top:445px;font-size:14px;line-height:14px;left:271.8px;letter-spacing:0.32px;">Site Mesh Groups</span>
<span class="t" style="top:477px;font-size:14px;line-height:14px;left:271.8px;letter-spacing:0.3px;">DC Cluster Groups</span>
<div class="b" style="left:257px;top:506px;width:219px;height:1px;background:#dfe4f0;"></div>
<span class="t" style="top:526px;font-size:12px;line-height:12px;left:271.8px;font-weight:700;color:#9aa5b8;letter-spacing:0.21px;">Legacy Network Configuration</span>
<span class="t" style="top:560px;font-size:14px;line-height:14px;left:271.8px;letter-spacing:0.61px;">Virtual Networks</span>
<span class="t" style="top:592px;font-size:14px;line-height:14px;left:271.8px;letter-spacing:0.62px;">Network Connectors</span>
<span class="t" style="top:624px;font-size:14px;line-height:14px;left:271.8px;letter-spacing:0.62px;">Network Interfaces</span>
<span class="t" style="top:656px;font-size:14px;line-height:14px;left:271.8px;letter-spacing:0.57px;">Subnets</span>
<span class="t" style="top:688px;font-size:14px;line-height:14px;left:271.8px;letter-spacing:0.46px;">IP Address Allocators</span>
<div class="b" style="left:1514px;top:696px;width:44px;height:88px;background:#fff;border-radius:7px;border-left:4px solid #2f66f6;box-shadow:0 2px 10px rgba(20,30,70,0.18);"></div>
<svg class="b" style="left:1526px;top:710px;" width="16" height="16" viewBox="0 0 16 16"><circle cx="8" cy="8" r="7" fill="none" stroke="#2f66f6" stroke-width="1.500"/></svg>
<span class="t" style="top:713px;font-size:12px;line-height:12px;left:1530.5px;font-weight:700;color:#2f66f6;">?</span>
<span class="t" style="left:1535px;top:756px;font-size:16px;line-height:16px;color:#333;letter-spacing:0.6px;transform:translate(-50%,-50%) rotate(-90deg);">Help</span>
<svg class="b" style="left:0px;top:913px;" width="6" height="11" viewBox="0 0 6 11"><path d="M0 0.500Q0.800 8 5.600 11H0Z" fill="#0d2440"/></svg>
<svg class="b" style="left:1548px;top:920px;" width="4" height="4" viewBox="0 0 4 4"><path d="M4 0.800L0.800 4H4Z" fill="#8a8d92"/></svg>
</body></html>
